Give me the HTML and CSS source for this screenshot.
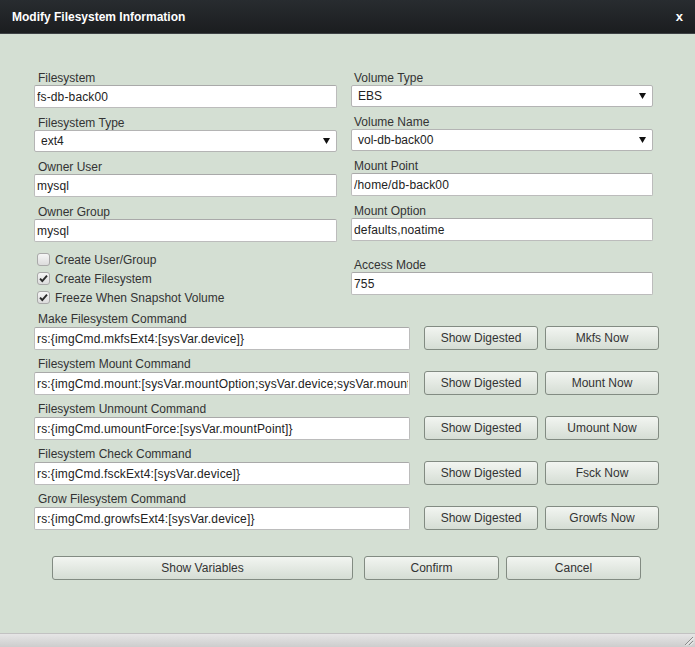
FILE: index.html
```html
<!DOCTYPE html>
<html>
<head>
<meta charset="utf-8">
<title>Modify Filesystem Information</title>
<link rel="stylesheet" href="styles.css">
</head>
<body>
<div class="dialog">
  <div class="titlebar">
    <span class="title">Modify Filesystem Information</span>
    <span class="close">x</span>
  </div>
  <div class="content">
    <div class="top">
      <div class="col col-left">
        <div class="field">
          <label class="label">Filesystem</label>
          <input class="input" type="text" value="fs-db-back00">
        </div>
        <div class="field">
          <label class="label">Filesystem Type</label>
          <div class="select"><span>ext4</span><svg class="arrow" width="7" height="6" viewBox="0 0 7 6"><path d="M0 0H7L3.5 6Z" fill="#111"/></svg></div>
        </div>
        <div class="field">
          <label class="label">Owner User</label>
          <input class="input" type="text" value="mysql">
        </div>
        <div class="field">
          <label class="label">Owner Group</label>
          <input class="input" type="text" value="mysql">
        </div>
        <div class="checks">
          <div class="check"><span class="box"></span><span>Create User/Group</span></div>
          <div class="check"><span class="box"><svg width="11" height="11" viewBox="0 0 11 11"><path d="M2 5.6L4.3 8L9 2.6" fill="none" stroke="#2a2a2a" stroke-width="1.9"/></svg></span><span>Create Filesystem</span></div>
          <div class="check"><span class="box"><svg width="11" height="11" viewBox="0 0 11 11"><path d="M2 5.6L4.3 8L9 2.6" fill="none" stroke="#2a2a2a" stroke-width="1.9"/></svg></span><span>Freeze When Snapshot Volume</span></div>
        </div>
      </div>
      <div class="col col-right">
        <div class="field">
          <label class="label">Volume Type</label>
          <div class="select"><span>EBS</span><svg class="arrow" width="7" height="6" viewBox="0 0 7 6"><path d="M0 0H7L3.5 6Z" fill="#111"/></svg></div>
        </div>
        <div class="field">
          <label class="label">Volume Name</label>
          <div class="select"><span>vol-db-back00</span><svg class="arrow" width="7" height="6" viewBox="0 0 7 6"><path d="M0 0H7L3.5 6Z" fill="#111"/></svg></div>
        </div>
        <div class="field">
          <label class="label">Mount Point</label>
          <input class="input" type="text" value="/home/db-back00">
        </div>
        <div class="field">
          <label class="label">Mount Option</label>
          <input class="input" type="text" value="defaults,noatime">
        </div>
        <div class="field field-gap">
          <label class="label">Access Mode</label>
          <input class="input" type="text" value="755">
        </div>
      </div>
    </div>

    <div class="commands">
      <div class="cmd">
        <label class="label cmd-label">Make Filesystem Command</label>
        <div class="cmd-row">
          <input class="input cmd-input" type="text" value="rs:{imgCmd.mkfsExt4:[sysVar.device]}">
          <button class="btn btn-cmd">Show Digested</button>
          <button class="btn btn-cmd">Mkfs Now</button>
        </div>
      </div>
      <div class="cmd">
        <label class="label cmd-label">Filesystem Mount Command</label>
        <div class="cmd-row">
          <input class="input cmd-input" type="text" value="rs:{imgCmd.mount:[sysVar.mountOption;sysVar.device;sysVar.mountPoint]}">
          <button class="btn btn-cmd">Show Digested</button>
          <button class="btn btn-cmd">Mount Now</button>
        </div>
      </div>
      <div class="cmd">
        <label class="label cmd-label">Filesystem Unmount Command</label>
        <div class="cmd-row">
          <input class="input cmd-input" type="text" value="rs:{imgCmd.umountForce:[sysVar.mountPoint]}">
          <button class="btn btn-cmd">Show Digested</button>
          <button class="btn btn-cmd">Umount Now</button>
        </div>
      </div>
      <div class="cmd">
        <label class="label cmd-label">Filesystem Check Command</label>
        <div class="cmd-row">
          <input class="input cmd-input" type="text" value="rs:{imgCmd.fsckExt4:[sysVar.device]}">
          <button class="btn btn-cmd">Show Digested</button>
          <button class="btn btn-cmd">Fsck Now</button>
        </div>
      </div>
      <div class="cmd">
        <label class="label cmd-label">Grow Filesystem Command</label>
        <div class="cmd-row">
          <input class="input cmd-input" type="text" value="rs:{imgCmd.growfsExt4:[sysVar.device]}">
          <button class="btn btn-cmd">Show Digested</button>
          <button class="btn btn-cmd">Growfs Now</button>
        </div>
      </div>
    </div>

    <div class="actions">
      <button class="btn btn-vars">Show Variables</button>
      <button class="btn btn-confirm">Confirm</button>
      <button class="btn btn-cancel">Cancel</button>
    </div>
  </div>
  <div class="statusbar">
    <svg class="grip" width="11" height="11" viewBox="0 0 11 11">
      <path d="M10 2L2 10M10 6L6 10" stroke="#8a8a8a" stroke-width="1" fill="none"/>
      <path d="M10.5 3L3 10.5M10.5 7L7 10.5" stroke="#f4f4f4" stroke-width="1" fill="none"/>
    </svg>
  </div>
</div>
</body>
</html>
```

FILE: styles.css
```css
html, body {
  margin: 0;
  padding: 0;
}

body {
  font-family: "Liberation Sans", Arial, sans-serif;
  font-size: 12px;
  color: #333;
  background: #d4dfd3;
}

.dialog {
  height: 100vh;
  display: flex;
  flex-direction: column;
}

.titlebar {
  box-sizing: border-box;
  height: 34px;
  flex: none;
  display: flex;
  align-items: center;
  justify-content: space-between;
  padding: 0 12px 0 12px;
  background: linear-gradient(#282c30, #1b1d1f);
  border-bottom: 1px solid #3d4145;
  color: #fff;
  font-weight: bold;
  font-size: 12px;
}

.close {
  font-size: 13px;
  font-weight: bold;
  line-height: 1;
  margin-top: -1px;
}

.content {
  flex: 1;
  padding: 37px 0 0 34px;
}

.top {
  display: flex;
  gap: 14px;
}

.col-left {
  width: 303px;
}

.col-right {
  width: 302px;
}

.field {
  margin-bottom: 8px;
}

.field-gap {
  margin-top: 17px;
}

.label {
  display: block;
  height: 14px;
  line-height: 14px;
  padding-left: 3px;
  color: #333;
}

.col-left .label,
.cmd-label {
  padding-left: 4px;
}

.input {
  box-sizing: border-box;
  display: block;
  width: 100%;
  height: 23px;
  margin: 0;
  padding: 0 1px 0 2px;
  border: 1px solid #bcbcbc;
  border-top-color: #a9a9a9;
  border-radius: 2px;
  background: #fff;
  font-family: "Liberation Sans", Arial, sans-serif;
  font-size: 12px;
  letter-spacing: 0.15px;
  color: #222;
  outline: none;
}

.select {
  box-sizing: border-box;
  height: 22px;
  display: flex;
  align-items: center;
  justify-content: space-between;
  padding: 0 6px 0 6px;
  border: 1px solid #b4b4b4;
  border-radius: 2px;
  background: #fff;
  color: #222;
}

.arrow {
  display: block;
}

.checks {
  padding-left: 3px;
}

.check {
  display: flex;
  align-items: center;
  gap: 5px;
  height: 19px;
}

.box {
  box-sizing: border-box;
  width: 13px;
  height: 13px;
  border: 1px solid #a9a9a9;
  border-radius: 3px;
  background: linear-gradient(#f6f6f6, #dcdcdc);
  display: flex;
  align-items: center;
  justify-content: center;
}

.box svg {
  display: block;
}

.commands {
  margin-top: 6px;
}

.cmd {
  margin-bottom: 8px;
}

.cmd-label {
  height: 13px;
  line-height: 13px;
}

.cmd-row {
  display: flex;
  align-items: flex-end;
  height: 24px;
}

.cmd-input {
  width: 376px;
  flex: none;
  margin-right: 14px;
}

.btn {
  box-sizing: border-box;
  height: 24px;
  margin: 0;
  padding: 0;
  border: 1px solid #828b82;
  border-radius: 3px;
  background: linear-gradient(#f2f5f1, #d5ddd4);
  font-family: "Liberation Sans", Arial, sans-serif;
  font-size: 12px;
  color: #333;
  flex: none;
}

.btn-cmd {
  width: 114px;
}

.btn-cmd + .btn-cmd {
  margin-left: 7px;
}

.actions {
  display: flex;
  margin-top: 26px;
  padding-left: 18px;
}

.btn-vars {
  width: 301px;
}

.btn-confirm {
  width: 135px;
  margin-left: 11px;
}

.btn-cancel {
  width: 135px;
  margin-left: 7px;
}

.statusbar {
  box-sizing: border-box;
  height: 14px;
  flex: none;
  display: flex;
  justify-content: flex-end;
  align-items: flex-end;
  padding: 0 1px 1px 0;
  background: linear-gradient(#e6e6e6, #cdcdcd);
  border-top: 1px solid #c2c2c2;
}

.grip {
  display: block;
}
```
